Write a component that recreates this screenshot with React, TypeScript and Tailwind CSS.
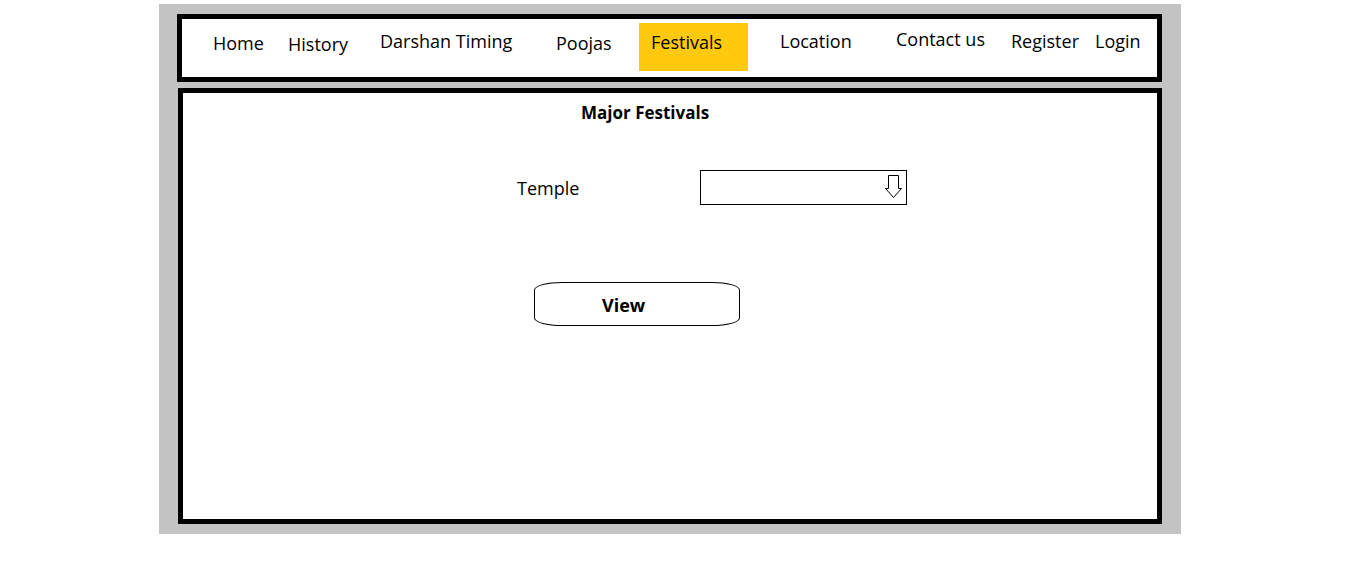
import React from "react";

const font = { fontFamily: '"Open Sans", "Liberation Sans", sans-serif' };

export default function App() {
  return (
    <div className="w-[1356px] h-[578px] bg-white text-black" style={font}>
      <div className="ml-[159px] pt-[4px]">
        <div className="w-[1022px] h-[530px] bg-[#c3c3c3] pt-[10px] flex flex-col">
          {/* Nav */}
          <div className="ml-[18px] w-[985px] h-[68px] border-[5px] border-black bg-white flex items-start pl-[31px] text-[18px] leading-[24px]">
            <div className="w-[75px] mt-[12px]">Home</div>
            <div className="w-[92px] mt-[13px]">History</div>
            <div className="w-[176px] mt-[10px]">Darshan Timing</div>
            <div className="w-[83px] mt-[12px]">Poojas</div>
            <div className="w-[109px] h-[48px] mt-[4px] bg-[#ffc90e] pl-[12px] pt-[7px]">Festivals</div>
            <div className="w-[116px] ml-[32px] mt-[10px]">Location</div>
            <div className="w-[115px] mt-[8px]">Contact us</div>
            <div className="w-[84px] mt-[10px]">Register</div>
            <div className="mt-[10px]">Login</div>
          </div>
          {/* Content */}
          <div className="ml-[19px] mt-[6px] w-[984px] h-[436px] border-[5px] border-black bg-white flex flex-col">
            <div className="pl-[398px] mt-[8px] text-[17px] leading-[24px] font-bold">Major Festivals</div>
            <div className="mt-[45px] flex items-center pl-[334px]">
              <div className="w-[183px] text-[18px] leading-[24px]">Temple</div>
              <div className="w-[207px] h-[35px] border border-black flex items-start justify-end pr-[3px] pt-[4px]">
                <svg width="18" height="24" viewBox="0 0 18 24">
                  <path
                    d="M3.5 0.5 H13.5 V13.5 H16.5 L8.5 22.5 L0.5 13.5 H3.5 Z"
                    fill="white"
                    stroke="black"
                    strokeWidth="1"
                  />
                </svg>
              </div>
            </div>
            <div className="mt-[77px] pl-[351px]">
              <div className="w-[206px] h-[44px] border border-black rounded-[28px/8px] flex items-center pl-[67px] pt-[2px] text-[18px] font-bold leading-[24px]">
                View
              </div>
            </div>
          </div>
        </div>
      </div>
    </div>
  );
}
